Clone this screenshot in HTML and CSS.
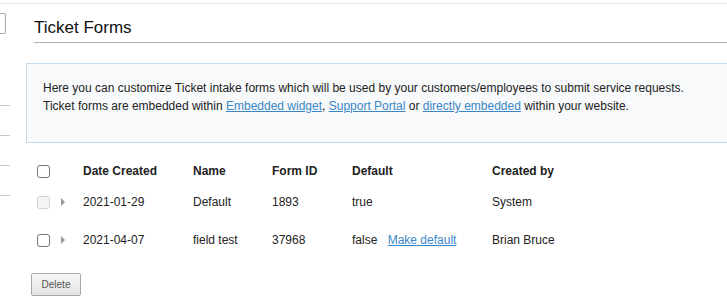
FILE: index.html
```html
<!DOCTYPE html>
<html lang="en">
<head>
    <meta charset="UTF-8">
    <meta name="viewport" content="width=device-width, initial-scale=1.0">
    <title>Ticket Forms</title>
    <link rel="stylesheet" href="styles.css">
</head>
<body>
    <div class="topbar"></div>
    <div class="page">
        <aside class="sidebar">
            <div class="side-box"></div>
            <div class="side-links">
                <div class="side-line"></div>
                <div class="side-line"></div>
                <div class="side-line"></div>
                <div class="side-line"></div>
            </div>
        </aside>
        <main class="content">
            <h1 class="page-title">Ticket Forms</h1>
            <div class="info-box">
                <p>Here you can customize Ticket intake forms which will be used by your customers/employees to submit service requests.</p>
                <p>Ticket forms are embedded within <a href="#">Embedded widget</a>, <a href="#">Support Portal</a> or <a href="#">directly embedded</a> within your website.</p>
            </div>
            <table class="forms-table">
                <thead>
                    <tr>
                        <th class="col-check"><span class="check"></span></th>
                        <th class="col-arrow"></th>
                        <th class="col-date">Date Created</th>
                        <th class="col-name">Name</th>
                        <th class="col-id">Form ID</th>
                        <th class="col-default">Default</th>
                        <th>Created by</th>
                    </tr>
                </thead>
                <tbody>
                    <tr class="row-first">
                        <td class="col-check"><span class="check disabled"></span></td>
                        <td class="col-arrow"><span class="arrow"></span></td>
                        <td>2021-01-29</td>
                        <td>Default</td>
                        <td>1893</td>
                        <td>true</td>
                        <td>System</td>
                    </tr>
                    <tr class="row-second">
                        <td class="col-check"><span class="check"></span></td>
                        <td class="col-arrow"><span class="arrow"></span></td>
                        <td>2021-04-07</td>
                        <td>field test</td>
                        <td>37968</td>
                        <td>false <a href="#" class="make-default">Make default</a></td>
                        <td>Brian Bruce</td>
                    </tr>
                </tbody>
            </table>
            <button class="btn-delete">Delete</button>
        </main>
    </div>
</body>
</html>
```

FILE: styles.css
```css
html, body {
    margin: 0;
    padding: 0;
    background-color: #ffffff;
    font-family: "Liberation Sans", Arial, sans-serif;
    color: #222222;
    overflow: hidden;
}
.topbar {
    height: 3px;
    border-bottom: 1px solid #e6ebf0;
}
.page {
    display: flex;
}
.sidebar {
    width: 10px;
    flex-shrink: 0;
    padding-top: 9px;
}
.side-box {
    width: 5px;
    height: 19px;
    border: 1px solid #a8a8a8;
    border-left: none;
    border-radius: 0 2px 2px 0;
}
.side-links {
    display: flex;
    flex-direction: column;
    gap: 29px;
    margin-top: 71px;
}
.side-line {
    height: 1px;
    background-color: #c8c8c8;
}
.content {
    flex: 1;
    padding-left: 16px;
    margin-right: -2px;
}
.page-title {
    margin: 14px 0 0 8px;
    padding-bottom: 4px;
    font-size: 17px;
    line-height: 20px;
    font-weight: normal;
    color: #111111;
    border-bottom: 1px solid #b4b4b4;
}
.info-box {
    margin-top: 20px;
    padding: 15px 16px 27px 16px;
    background-color: #f7f9fb;
    border: 1px solid #c6dbea;
    font-size: 12px;
    line-height: 18px;
    color: #222222;
}
.info-box p {
    margin: 0;
}
.info-box a, .make-default {
    color: #3a87c8;
    text-decoration: underline;
}
.forms-table {
    margin: 13px 0 0 11px;
    border-collapse: collapse;
    font-size: 12px;
    color: #222222;
}
.forms-table th {
    height: 30px;
    padding: 0;
    text-align: left;
    font-weight: bold;
    vertical-align: middle;
}
.forms-table td {
    padding: 0;
    vertical-align: middle;
}
.row-first td {
    height: 32px;
}
.row-second td {
    height: 44px;
}
.col-check {
    width: 23px;
}
.col-arrow {
    width: 23px;
}
.col-date {
    width: 110px;
}
.col-name {
    width: 79px;
}
.col-id {
    width: 80px;
}
.col-default {
    width: 140px;
}
.check {
    display: block;
    width: 11px;
    height: 11px;
    border: 1px solid #767676;
    border-radius: 3px;
    background-color: #ffffff;
}
.check.disabled {
    border-color: #d4d4d4;
    background-color: #f5f5f5;
}
.arrow {
    display: block;
    width: 0;
    height: 0;
    margin-left: 1px;
    border-left: 4px solid #999999;
    border-top: 4px solid transparent;
    border-bottom: 4px solid transparent;
}
.make-default {
    margin-left: 7px;
}
.btn-delete {
    display: block;
    margin: 11px 0 0 5px;
    width: 50px;
    height: 23px;
    padding: 0;
    font-family: "Liberation Sans", Arial, sans-serif;
    font-size: 10px;
    color: #555555;
    background: linear-gradient(#f7f7f7, #e2e2e2);
    border: 1px solid #a8a8a8;
    border-radius: 2px;
}
```
